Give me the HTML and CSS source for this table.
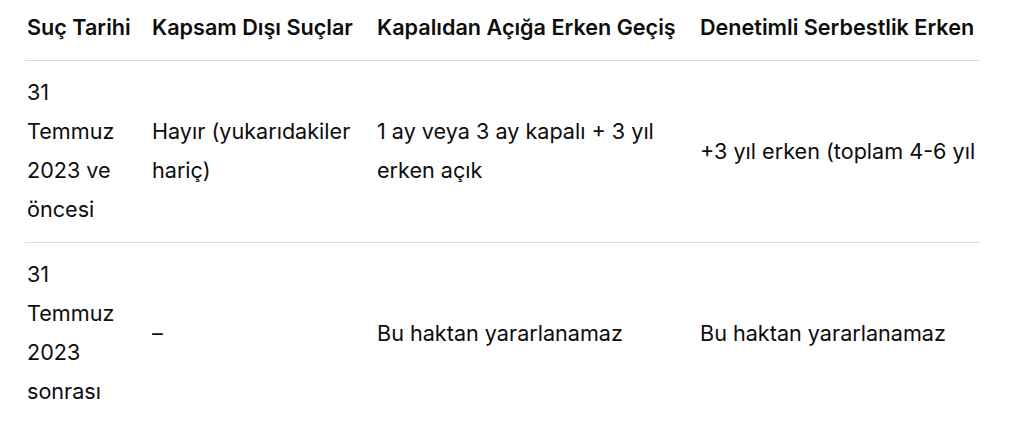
FILE: index.html
```html
<!DOCTYPE html>
<html lang="tr">
<head>
<meta charset="utf-8">
<title>Tablo</title>
<link rel="stylesheet" href="styles.css">
</head>
<body>
<div class="wrap">
  <table class="tbl">
    <colgroup>
      <col class="c1"><col class="c2"><col class="c3"><col class="c4">
    </colgroup>
    <thead>
      <tr>
        <th>Suç Tarihi</th>
        <th>Kapsam Dışı Suçlar</th>
        <th>Kapalıdan Açığa Erken Geçiş</th>
        <th>Denetimli Serbestlik Erken Geçiş</th>
      </tr>
    </thead>
    <tbody>
      <tr>
        <td>31 Temmuz 2023 ve öncesi</td>
        <td>Hayır (yukarıdakiler hariç)</td>
        <td>1 ay veya 3 ay kapalı + 3 yıl erken açık</td>
        <td>+3 yıl erken (toplam 4-6 yıl erken)</td>
      </tr>
      <tr>
        <td>31 Temmuz 2023 sonrası</td>
        <td>–</td>
        <td>Bu haktan yararlanamaz</td>
        <td>Bu haktan yararlanamaz</td>
      </tr>
    </tbody>
  </table>
</div>
</body>
</html>
```
FILE: styles.css
```css
html, body {
  margin: 0;
  padding: 0;
  background: #ffffff;
}
body {
  font-family: Inter, "Noto Sans", "Liberation Sans", sans-serif;
  color: #0d0d0d;
}
.wrap {
  margin-left: 25px;
  width: 955px;
  overflow: hidden;
}
.tbl {
  border-collapse: collapse;
  table-layout: fixed;
  width: 1150px;
  font-size: 21.6px;
  line-height: 39px;
}
.c1 { width: 117px; }
.c2 { width: 225px; }
.c3 { width: 323px; }
.c4 { width: 485px; }
.tbl th {
  text-align: left;
  font-weight: 600;
  white-space: nowrap;
  padding: 8px 10px 13px 10px;
  border-bottom: 1px solid #d4dce2;
  vertical-align: middle;
}
.tbl td {
  padding: 12px 10px 13px 10px;
  vertical-align: middle;
  border-bottom: 1px solid #d4dce2;
}
.tbl th:first-child,
.tbl td:first-child {
  padding-left: 2px;
}
.tbl tbody tr:last-child td {
  border-bottom: none;
}
```
